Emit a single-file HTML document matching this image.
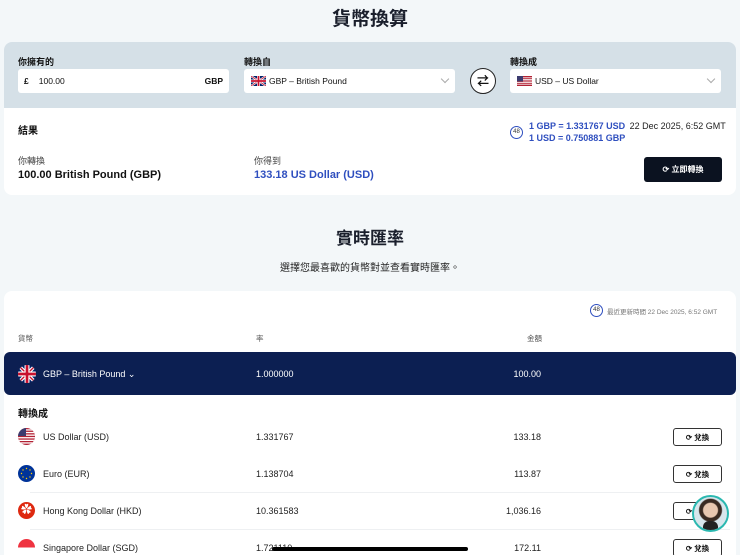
<!DOCTYPE html>
<html><head><meta charset="utf-8"><style>
*{margin:0;padding:0;box-sizing:border-box}
html,body{width:740px;height:555px;overflow:hidden}
body{background:#f3f7f9;font-family:"Liberation Sans","Noto Sans CJK TC",sans-serif;color:#111;position:relative}
.a{position:absolute;white-space:nowrap}
.card{position:absolute;left:4px;width:732px;background:#fff;border-radius:8px;overflow:hidden}
.lbl{font-size:9px;font-weight:bold}
.inp{position:absolute;top:69px;height:24px;background:#fff;border-radius:3px;font-size:8.5px;display:flex;align-items:center;padding:0 6px}
.chev{position:absolute;right:7px;top:7px;width:6px;height:6px;border-right:1px solid #aaa;border-bottom:1px solid #aaa;transform:rotate(45deg)}
.row{font-size:9px;color:#222}
.btn{position:absolute;left:673px;width:49px;height:18px;border:1px solid #333;border-radius:3px;font-size:7.5px;font-weight:bold;display:flex;align-items:center;justify-content:center;background:#fff}
.sep{position:absolute;left:30px;width:700px;height:1px;background:#eef0f2}
.flag{position:absolute;left:18px;width:17px;height:17px;border-radius:50%;overflow:hidden}
</style></head><body>
<div class="a" style="left:0;width:740px;text-align:center;top:4px;font-size:19px;font-weight:bold;color:#1a1f2c">貨幣換算</div>

<div class="card" style="top:42px;height:153px">
  <div style="position:absolute;left:0;top:0;width:732px;height:66px;background:#d5e0e7"></div>
</div>
<div class="a lbl" style="left:18px;top:55px">你擁有的</div>
<div class="a lbl" style="left:244px;top:55px">轉換自</div>
<div class="a lbl" style="left:510px;top:55px">轉換成</div>
<div class="inp" style="left:18px;width:211px"><b style="margin-right:10px">£</b>100.00<b style="margin-left:auto">GBP</b></div>
<div class="inp" style="left:244px;width:211px;padding-left:7px">
<svg width="15" height="10" viewBox="0 0 60 40"><rect width="60" height="40" fill="#012169"/><path d="M0 0L60 40M60 0L0 40" stroke="#fff" stroke-width="8"/><path d="M0 0L60 40M60 0L0 40" stroke="#c8102e" stroke-width="3"/><path d="M30 0V40M0 20H60" stroke="#fff" stroke-width="12"/><path d="M30 0V40M0 20H60" stroke="#c8102e" stroke-width="7"/></svg>
<span style="margin-left:3px">GBP – British Pound</span><div class="chev"></div></div>
<div class="a" style="left:470px;top:68px;width:26px;height:26px;border:1.2px solid #222;border-radius:50%;background:#fff;font-size:12px;text-align:center;line-height:24px;font-weight:bold">⇄</div>
<div class="inp" style="left:510px;width:211px;padding-left:7px">
<svg width="15" height="10" viewBox="0 0 15 10"><rect width="15" height="10" fill="#b22234"/><g fill="#fff"><rect y="1.4" width="15" height="0.8"/><rect y="3" width="15" height="0.8"/><rect y="4.6" width="15" height="0.8"/><rect y="6.2" width="15" height="0.8"/><rect y="7.8" width="15" height="0.8"/></g><rect width="6" height="5.4" fill="#3c3b6e"/></svg>
<span style="margin-left:3px">USD – US Dollar</span><div class="chev"></div></div>

<div class="a" style="left:18px;top:122px;font-size:10px;font-weight:bold">結果</div>
<div class="a" style="left:510px;top:126px;width:13px;height:13px;border:1px solid #2f4fbf;border-radius:50%;font-size:6px;text-align:center;line-height:11px;color:#333">48</div>
<div class="a" style="left:529px;top:121px;font-size:9px;color:#2f4fbf;font-weight:bold">1 GBP = 1.331767 USD <span style="color:#222;font-weight:normal;margin-left:2px">22 Dec 2025, 6:52 GMT</span></div>
<div class="a" style="left:529px;top:133px;font-size:9px;color:#2f4fbf;font-weight:bold">1 USD = 0.750881 GBP</div>
<div class="a" style="left:18px;top:154px;font-size:9px;color:#444">你轉換</div>
<div class="a" style="left:18px;top:169px;font-size:11px;font-weight:bold">100.00 British Pound (GBP)</div>
<div class="a" style="left:254px;top:154px;font-size:9px;color:#444">你得到</div>
<div class="a" style="left:254px;top:169px;font-size:11px;font-weight:bold;color:#2f4fbf">133.18 US Dollar (USD)</div>
<div class="a" style="left:644px;top:157px;width:78px;height:25px;background:#0b1220;border-radius:3px;color:#fff;font-size:8px;font-weight:bold;text-align:center;line-height:25px">⟳ 立即轉換</div>

<div class="a" style="left:0;width:740px;text-align:center;top:224px;font-size:17px;font-weight:bold;color:#1a1f2c">實時匯率</div>
<div class="a" style="left:0;width:740px;text-align:center;top:259px;font-size:10px;color:#222">選擇您最喜歡的貨幣對並查看實時匯率。</div>

<div class="card" style="top:291px;height:264px;border-radius:8px 8px 0 0"></div>
<div class="a" style="left:590px;top:304px;width:13px;height:13px;border:1px solid #2f4fbf;border-radius:50%;font-size:6px;text-align:center;line-height:11px;color:#333">48</div>
<div class="a" style="left:607px;top:306px;font-size:6.5px;color:#777">最近更新時間 22 Dec 2025, 6:52 GMT</div>
<div class="a" style="left:18px;top:333px;font-size:7.5px;color:#555">貨幣</div>
<div class="a" style="left:256px;top:333px;font-size:7.5px;color:#555">率</div>
<div class="a" style="left:527px;top:333px;font-size:7.5px;color:#555">金額</div>

<div class="a" style="left:4px;top:352px;width:732px;height:43px;background:#0c1f52;border-radius:6px"></div>
<div class="flag" style="top:365px;width:18px;height:18px">
<svg width="18" height="18" viewBox="0 0 40 40"><rect width="40" height="40" fill="#012169"/><path d="M0 0L40 40M40 0L0 40" stroke="#fff" stroke-width="8"/><path d="M0 0L40 40M40 0L0 40" stroke="#c8102e" stroke-width="3"/><path d="M20 0V40M0 20H40" stroke="#fff" stroke-width="11"/><path d="M20 0V40M0 20H40" stroke="#c8102e" stroke-width="6"/></svg></div>
<div class="a" style="left:43px;top:369px;font-size:9px;color:#fff">GBP – British Pound ⌄</div>
<div class="a" style="left:256px;top:369px;font-size:9px;color:#fff">1.000000</div>
<div class="a" style="left:441px;width:100px;text-align:right;top:369px;font-size:9px;color:#fff">100.00</div>

<div class="a" style="left:18px;top:405px;font-size:10px;font-weight:bold">轉換成</div>

<div class="flag" style="top:428px"><svg width="17" height="17" viewBox="0 0 17 17"><rect width="17" height="17" fill="#b22234"/><g fill="#fff"><rect y="1.3" width="17" height="1.3"/><rect y="3.9" width="17" height="1.3"/><rect y="6.5" width="17" height="1.3"/><rect y="9.1" width="17" height="1.3"/><rect y="11.7" width="17" height="1.3"/><rect y="14.3" width="17" height="1.3"/></g><rect width="8" height="8" fill="#3c3b6e"/></svg></div>
<div class="a row" style="left:43px;top:432px">US Dollar (USD)</div>
<div class="a row" style="left:256px;top:432px">1.331767</div>
<div class="a row" style="left:441px;width:100px;text-align:right;top:432px">133.18</div>
<div class="btn" style="top:428px">⟳ 兌換</div>

<div class="flag" style="top:465px;background:#003399"><svg width="17" height="17" viewBox="0 0 17 17"><g fill="#ffcc00"><circle cx="8.5" cy="3.5" r=".7"/><circle cx="8.5" cy="13.5" r=".7"/><circle cx="3.5" cy="8.5" r=".7"/><circle cx="13.5" cy="8.5" r=".7"/><circle cx="5" cy="5" r=".7"/><circle cx="12" cy="5" r=".7"/><circle cx="5" cy="12" r=".7"/><circle cx="12" cy="12" r=".7"/></g></svg></div>
<div class="a row" style="left:43px;top:469px">Euro (EUR)</div>
<div class="a row" style="left:256px;top:469px">1.138704</div>
<div class="a row" style="left:441px;width:100px;text-align:right;top:469px">113.87</div>
<div class="btn" style="top:465px">⟳ 兌換</div>
<div class="sep" style="top:492px"></div>

<div class="flag" style="top:502px;background:#de2910;color:#fff;font-size:11px;text-align:center;line-height:17px">✿</div>
<div class="a row" style="left:43px;top:506px">Hong Kong Dollar (HKD)</div>
<div class="a row" style="left:256px;top:506px">10.361583</div>
<div class="a row" style="left:441px;width:100px;text-align:right;top:506px">1,036.16</div>
<div class="btn" style="top:502px">⟳ 兌換</div>
<div class="sep" style="top:529px"></div>

<div class="flag" style="top:539px;background:linear-gradient(#ef3340 50%,#fff 50%)"></div>
<div class="a row" style="left:43px;top:543px">Singapore Dollar (SGD)</div>
<div class="a row" style="left:256px;top:543px">1.721110</div>
<div class="a row" style="left:441px;width:100px;text-align:right;top:543px">172.11</div>
<div class="btn" style="top:539px">⟳ 兌換</div>

<div class="a" style="left:692px;top:495px;width:37px;height:37px;border-radius:50%;border:2px solid #2bb8b0;background:radial-gradient(circle at 50% 40%,#e8c7b0 0 7px,#3a2a22 8px 11px,#d8e6ec 12px);overflow:hidden">
<div style="position:absolute;left:9px;top:24px;width:15px;height:12px;background:#222;border-radius:6px 6px 0 0"></div></div>
<div class="a" style="left:272px;top:547px;width:196px;height:4px;background:#000;border-radius:2px"></div>
</body></html>
